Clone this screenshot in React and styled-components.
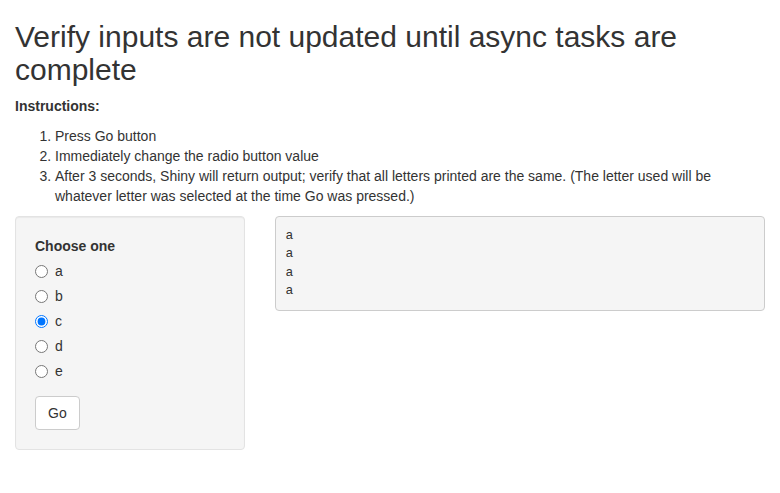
import styled, { createGlobalStyle } from "styled-components";
import { useState } from "react";

const GlobalStyle = createGlobalStyle`
  * { box-sizing: border-box; }
  body {
    margin: 0;
    font-family: "Liberation Sans", Arial, sans-serif;
    font-size: 14px;
    line-height: 1.42857143;
    color: #333;
    background: #fff;
  }
`;

const Page = styled.div`
  padding: 0 15px;
`;

const Title = styled.h2`
  margin: 20px 0 10px;
  font-size: 30px;
  font-weight: 500;
  line-height: 1.1;
`;

const Para = styled.p`
  margin: 0 0 10px;
`;

const Steps = styled.ol`
  margin: 0 0 10px;
  padding-left: 40px;
`;

const Row = styled.div`
  display: flex;
  margin: 0 -15px;
`;

const Col = styled.div`
  width: ${(p) => p.$span}%;
  padding: 0 15px;
`;

const Well = styled.form`
  min-height: 20px;
  padding: 19px;
  margin-bottom: 20px;
  background: #f5f5f5;
  border: 1px solid #e3e3e3;
  border-radius: 4px;
  box-shadow: inset 0 1px 1px rgba(0, 0, 0, 0.05);
`;

const FormGroup = styled.div`
  margin-bottom: 15px;
`;

const Label = styled.label`
  display: inline-block;
  margin-bottom: 5px;
  font-weight: 700;
`;

const Options = styled.div``;

const Radio = styled.div`
  position: relative;
  display: block;
  margin: 10px 0;
  & + & { margin-top: -5px; }
  &:first-child { margin-top: 0; }

  label {
    display: block;
    min-height: 20px;
    padding-left: 20px;
    cursor: pointer;
  }

  input {
    position: absolute;
    margin: 4px 0 0 -20px;
    width: 13px;
    height: 13px;
  }
`;

const Button = styled.button`
  display: inline-block;
  padding: 6px 12px;
  font-family: inherit;
  font-size: 14px;
  line-height: 1.42857143;
  color: #333;
  background: #fff;
  border: 1px solid #ccc;
  border-radius: 4px;
  cursor: pointer;
`;

const Output = styled.pre`
  display: block;
  margin: 0 0 10px;
  padding: 9.5px;
  font-family: "Liberation Mono", "Courier New", monospace;
  font-size: 13px;
  line-height: 1.42857143;
  color: #333;
  background: #f5f5f5;
  border: 1px solid #ccc;
  border-radius: 4px;
  white-space: pre-wrap;
`;

const choices = ["a", "b", "c", "d", "e"];

export default function App() {
  const [choice, setChoice] = useState("c");

  return (
    <Page>
      <GlobalStyle />
      <Title>Verify inputs are not updated until async tasks are complete</Title>
      <Para>
        <strong>Instructions:</strong>
      </Para>
      <Steps>
        <li>Press Go button</li>
        <li>Immediately change the radio button value</li>
        <li>
          After 3 seconds, Shiny will return output; verify that all letters printed are the same.
          (The letter used will be whatever letter was selected at the time Go was pressed.)
        </li>
      </Steps>
      <Row>
        <Col $span={100 / 3}>
          <Well onSubmit={(e) => e.preventDefault()}>
            <FormGroup>
              <Label>Choose one</Label>
              <Options>
                {choices.map((c) => (
                  <Radio key={c}>
                    <label>
                      <input
                        type="radio"
                        name="choice"
                        value={c}
                        checked={choice === c}
                        onChange={() => setChoice(c)}
                      />
                      <span>{c}</span>
                    </label>
                  </Radio>
                ))}
              </Options>
            </FormGroup>
            <Button type="button">Go</Button>
          </Well>
        </Col>
        <Col $span={200 / 3}>
          <Output>{"a\na\na\na"}</Output>
        </Col>
      </Row>
    </Page>
  );
}
